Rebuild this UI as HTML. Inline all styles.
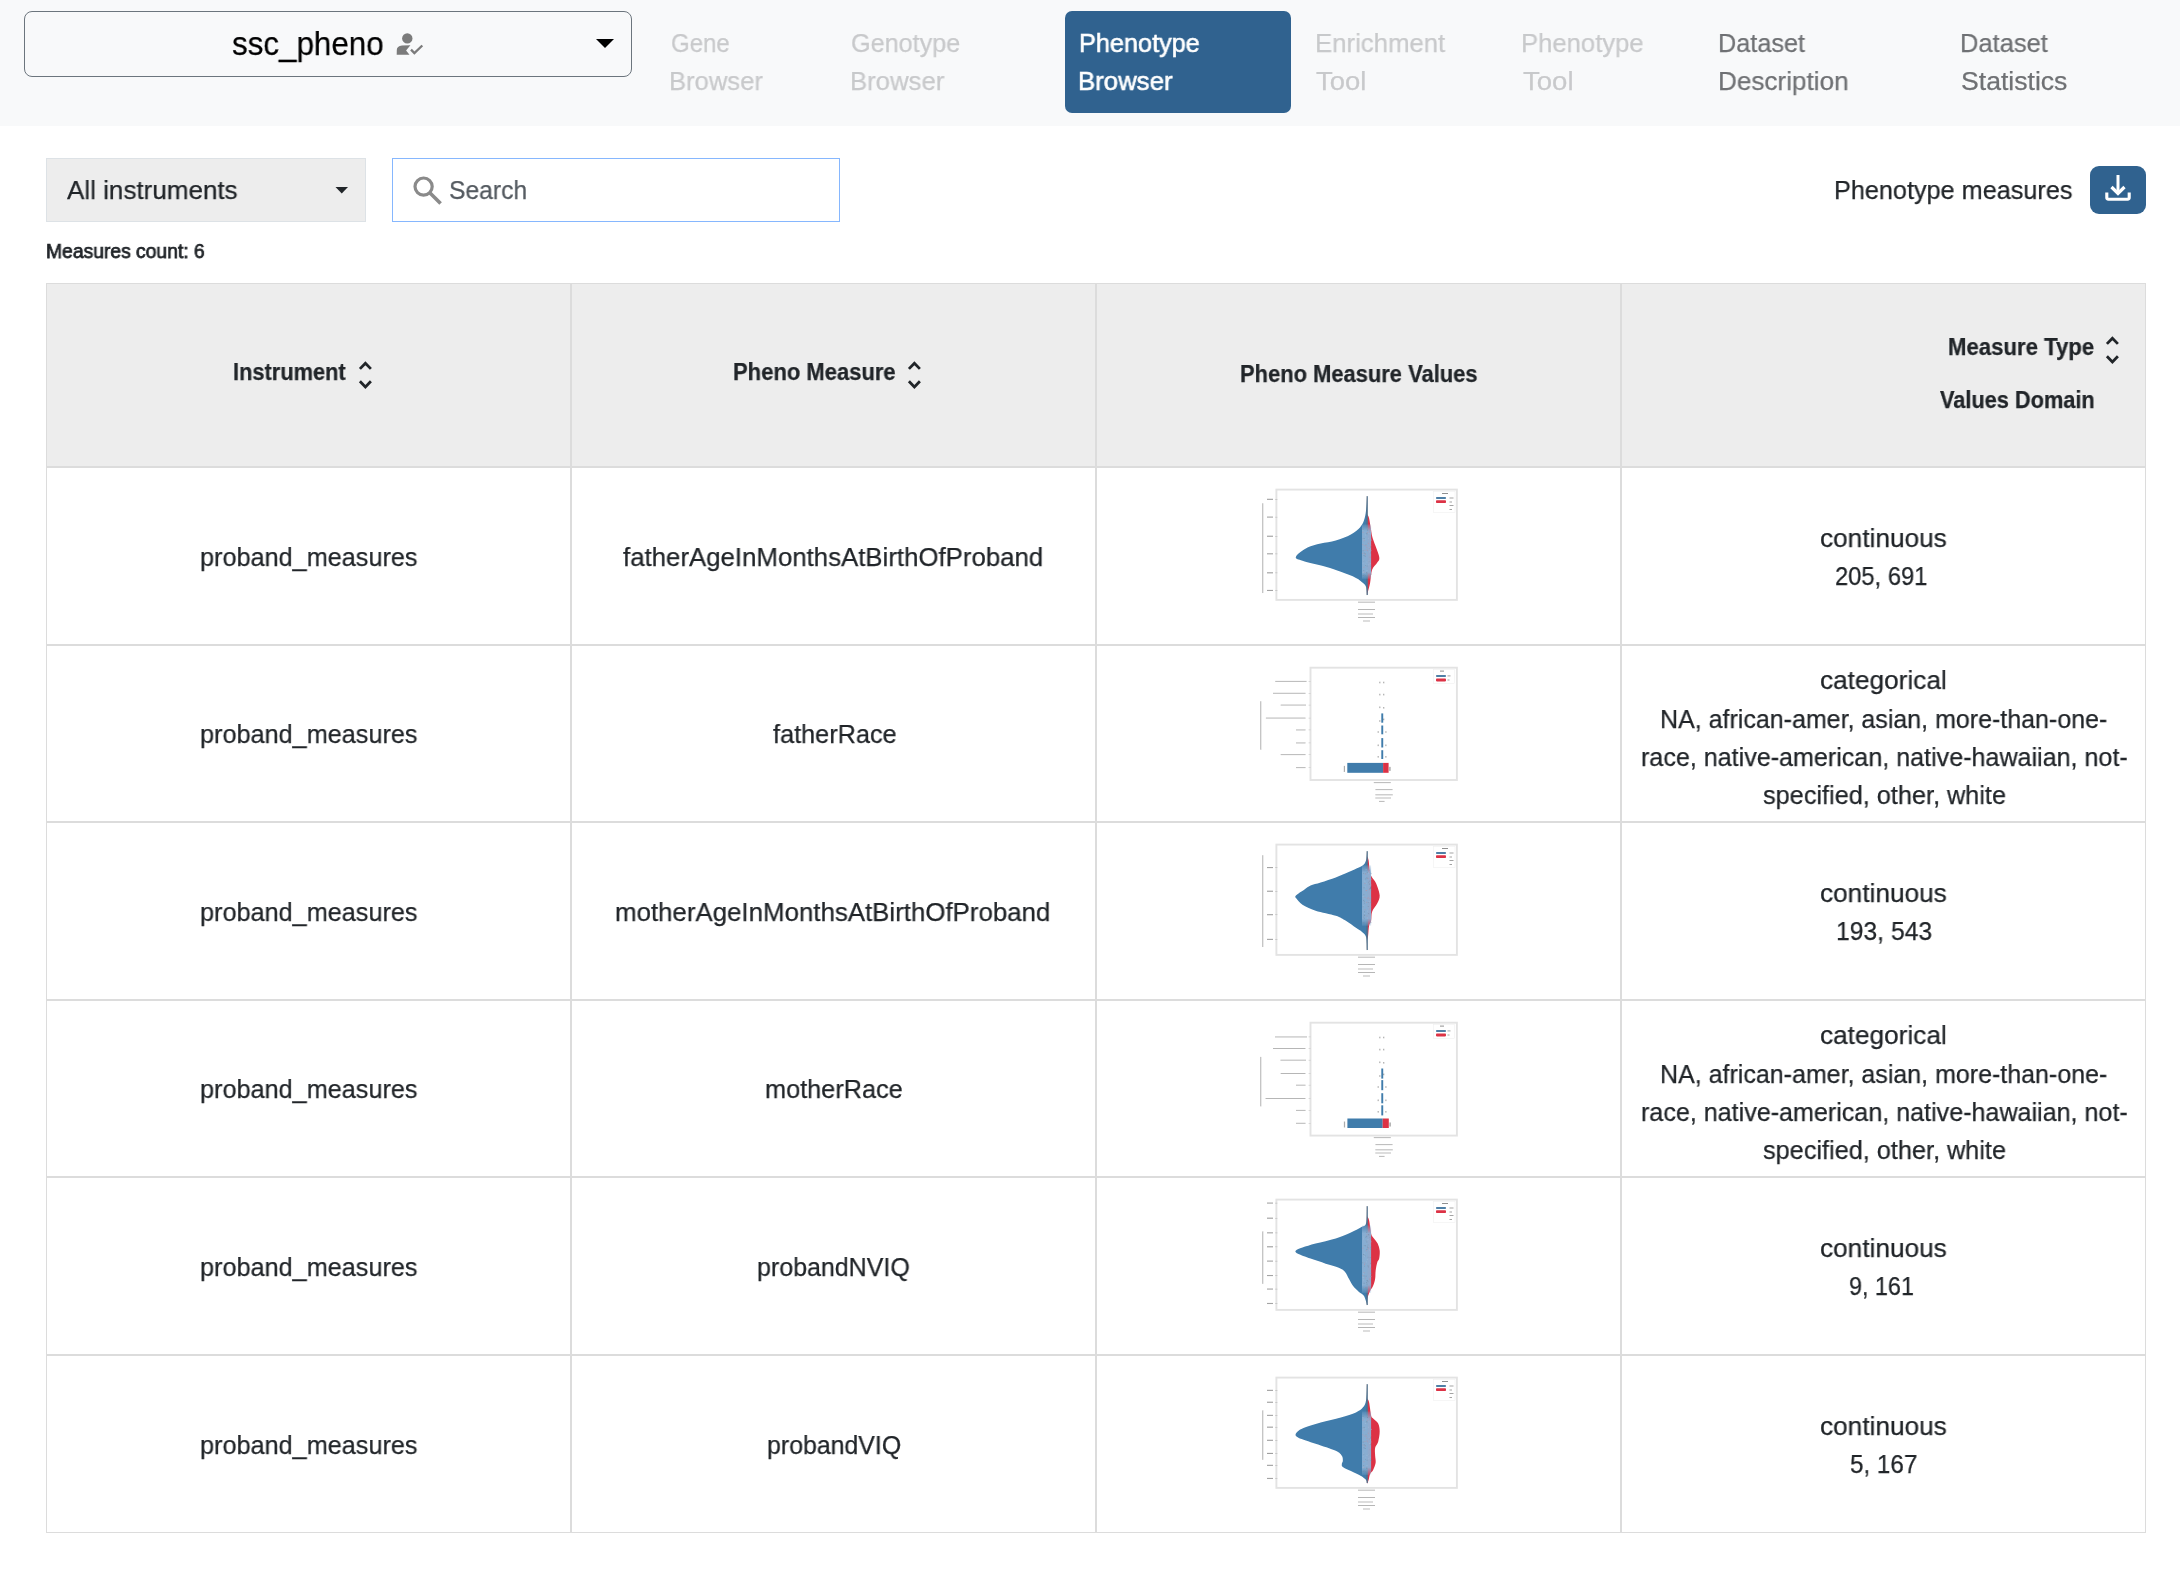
<!DOCTYPE html>
<html>
<head>
<meta charset="utf-8">
<style>
html,body{margin:0;padding:0;}
body{width:2180px;height:1572px;position:relative;overflow:hidden;background:#fff;font-family:"Liberation Sans",sans-serif;color:#212529;}
.a{position:absolute;white-space:nowrap;line-height:1;will-change:transform;transform-origin:0 0;-webkit-text-stroke-width:0.25px;}
.t{font-size:25.6px;}
.hdr{position:absolute;left:0;top:0;width:2180px;height:126px;background:#f8f9fa;}
.nav{font-size:25.6px;color:#c9cbcd;}
.navd{font-size:25.6px;color:#6f7275;}
.cell{position:absolute;box-sizing:border-box;border:1px solid #dcdcdc;}
.hcell{background:#ededed;}
.b{font-weight:bold;font-size:22.4px;}
.cc{position:absolute;box-sizing:border-box;display:flex;align-items:center;justify-content:center;text-align:center;font-size:25.6px;line-height:38.4px;padding-top:1px;}
.cc>div{white-space:nowrap;}
</style>
</head>
<body>
<div class="hdr"></div>
<!-- dataset selector -->
<div style="position:absolute;left:24px;top:11px;width:608px;height:66px;box-sizing:border-box;border:1px solid #6c757d;border-radius:8px;"></div>
<svg style="position:absolute;left:390px;top:28px" width="40" height="32" viewBox="0 0 40 32">
  <circle cx="17.3" cy="10.4" r="5.2" fill="#7b7b7b"/>
  <path d="M6.7 26.7 L19.5 26.7 L16.1 22.4 L20.4 17.3 L12 17.5 C8.5 18 6.8 19.5 6.8 22 Z" fill="#7b7b7b"/>
  <path d="M21 21.6 L24.4 25.1 L32.3 17.5" stroke="#7b7b7b" stroke-width="2.3" fill="none"/>
</svg>
<svg style="position:absolute;left:594px;top:37px" width="22" height="13" viewBox="0 0 22 13"><path d="M2 2 L20 2 L11 11 Z" fill="#000"/></svg>

<!-- nav -->
<div style="position:absolute;left:1065px;top:11px;width:226px;height:102px;background:#30628f;border-radius:7px;"></div>

<!-- toolbar -->
<div style="position:absolute;left:46px;top:158px;width:320px;height:64px;box-sizing:border-box;background:#ededed;border:1px solid #dde2e6;"></div>
<svg style="position:absolute;left:334px;top:185px" width="16" height="10" viewBox="0 0 16 10"><path d="M1.5 2 L14 2 L7.75 8.5 Z" fill="#212529"/></svg>
<div style="position:absolute;left:392px;top:158px;width:448px;height:64px;box-sizing:border-box;border:1px solid #86b7fe;background:#fff;"></div>
<svg style="position:absolute;left:408px;top:172px" width="40" height="36" viewBox="0 0 40 36">
  <circle cx="15.6" cy="14.6" r="8.6" stroke="#8a8a8a" stroke-width="3.2" fill="none"/>
  <path d="M21.8 20.8 L32.6 31.6" stroke="#8a8a8a" stroke-width="3.6" fill="none"/>
</svg>
<div style="position:absolute;left:2090px;top:166px;width:56px;height:48px;background:#30628f;border-radius:9px;"></div>
<svg style="position:absolute;left:2090px;top:166px" width="56" height="48" viewBox="0 0 56 48">
  <path d="M28 9 L28 27" stroke="#fff" stroke-width="3" fill="none"/>
  <path d="M21.5 21 L28 27.5 L34.5 21" stroke="#fff" stroke-width="3.2" fill="none"/>
  <path d="M16.8 26.5 L16.8 31.6 Q16.8 33.2 18.4 33.2 L37.6 33.2 Q39.2 33.2 39.2 31.6 L39.2 26.5" stroke="#fff" stroke-width="3.1" fill="none"/>
</svg>

<!-- TABLE -->
<div class="cell hcell" style="left:46px;top:283px;width:525px;height:184px;"></div>
<div class="cell hcell" style="left:571px;top:283px;width:525px;height:184px;"></div>
<div class="cell hcell" style="left:1096px;top:283px;width:525px;height:184px;"></div>
<div class="cell hcell" style="left:1621px;top:283px;width:525px;height:184px;"></div>
<svg style="position:absolute;left:356px;top:359px" width="18" height="32" viewBox="0 0 18 32"><path d="M3.9 9.9 L9.4 4.2 L14.9 9.9 M3.9 22.2 L9.4 27.9 L14.9 22.2" stroke="#212529" stroke-width="2.8" fill="none"/></svg>
<svg style="position:absolute;left:905px;top:359px" width="18" height="32" viewBox="0 0 18 32"><path d="M3.9 9.9 L9.4 4.2 L14.9 9.9 M3.9 22.2 L9.4 27.9 L14.9 22.2" stroke="#212529" stroke-width="2.8" fill="none"/></svg>
<svg style="position:absolute;left:2103px;top:334px" width="18" height="32" viewBox="0 0 18 32"><path d="M3.9 9.9 L9.4 4.2 L14.9 9.9 M3.9 22.2 L9.4 27.9 L14.9 22.2" stroke="#212529" stroke-width="2.8" fill="none"/></svg>
<div class="cell" style="left:46px;top:467px;width:525px;height:178px;"></div>
<div class="cell" style="left:571px;top:467px;width:525px;height:178px;"></div>
<div class="cell" style="left:1096px;top:467px;width:525px;height:178px;"></div>
<div class="cell" style="left:1621px;top:467px;width:525px;height:178px;"></div>
<svg style="position:absolute;left:1250px;top:480px" width="220" height="150" viewBox="0 0 220 150"><defs><filter id="bl480" x="-5%" y="-5%" width="110%" height="110%"><feGaussianBlur stdDeviation="0.35"/></filter></defs><g filter="url(#bl480)"><rect x="26.4" y="9.6" width="180.5" height="110.3" fill="none" stroke="#e3e3e3" stroke-width="1.9"/>
<rect x="17" y="18.78" width="6" height="1.1" fill="#222" opacity="0.42"/>
<rect x="25" y="19.08" width="2.5" height="0.6" fill="#888" opacity="0.45"/>
<rect x="17" y="36.54" width="6" height="1.1" fill="#222" opacity="0.42"/>
<rect x="25" y="36.84" width="2.5" height="0.6" fill="#888" opacity="0.45"/>
<rect x="17" y="55.71" width="6" height="1.1" fill="#222" opacity="0.42"/>
<rect x="25" y="56.01" width="2.5" height="0.6" fill="#888" opacity="0.45"/>
<rect x="17" y="73.27" width="6" height="1.1" fill="#222" opacity="0.42"/>
<rect x="25" y="73.57" width="2.5" height="0.6" fill="#888" opacity="0.45"/>
<rect x="17" y="92.24" width="6" height="1.1" fill="#222" opacity="0.42"/>
<rect x="25" y="92.54" width="2.5" height="0.6" fill="#888" opacity="0.45"/>
<rect x="17" y="109.91" width="6" height="1.1" fill="#222" opacity="0.42"/>
<rect x="25" y="110.21" width="2.5" height="0.6" fill="#888" opacity="0.45"/>
<rect x="12.2" y="23.21" width="1.1" height="89.82" fill="#333" opacity="0.35"/>
<path d="M117.07 34.35 C117.40 35.02 118.41 35.66 119.08 38.35 C119.76 41.03 120.43 46.93 121.10 50.46 C121.77 53.99 121.77 55.17 123.12 59.54 C124.47 63.91 128.50 72.83 129.18 76.70 C129.85 80.57 128.33 80.57 127.16 82.75 C125.98 84.94 123.29 86.45 122.11 89.82 C120.93 93.18 120.77 99.40 120.09 102.94 C119.42 106.47 118.58 109.00 118.07 111.01 C117.57 113.02 117.23 114.34 117.07 115.01 Z" fill="#dc3044"/>
<path d="M117.07 16.15 C116.90 18.50 116.56 26.24 116.06 30.28 C115.55 34.31 115.05 37.51 114.04 40.37 C113.03 43.23 112.19 45.08 110.00 47.43 C107.81 49.79 104.96 52.31 100.92 54.50 C96.88 56.68 90.83 59.04 85.78 60.55 C80.73 62.06 75.35 62.40 70.64 63.58 C65.93 64.76 61.64 65.43 57.52 67.62 C53.40 69.80 46.76 74.51 45.92 76.70 C45.08 78.88 47.52 79.05 52.48 80.73 C57.44 82.42 69.30 84.94 75.69 86.79 C82.08 88.64 85.78 89.99 90.83 91.84 C95.87 93.69 102.26 96.04 105.96 97.89 C109.66 99.74 111.35 101.42 113.03 102.94 C114.71 104.45 115.38 104.96 116.06 106.97 C116.73 108.99 116.90 113.70 117.07 115.05 L117.67 115.05 L117.67 16.15 Z" fill="#3f7cab"/>
<rect x="116.17" y="16.15" width="1.8" height="98.90" fill="#5a6673" opacity="0.5"/>
<defs><linearGradient id="sg474950" x1="0" y1="0" x2="0" y2="1"><stop offset="0" stop-color="#8cb0d4" stop-opacity="0.2"/><stop offset="0.12" stop-color="#8cb0d4" stop-opacity="0.95"/><stop offset="0.88" stop-color="#8cb0d4" stop-opacity="0.95"/><stop offset="1" stop-color="#8cb0d4" stop-opacity="0.2"/></linearGradient></defs>
<rect x="112.02" y="44.43" width="9.08" height="54.44" fill="url(#sg474950)"/>
<rect x="112.39" y="64.20" width="0.9" height="0.9" fill="#c98a98" opacity="0.55"/>
<rect x="116.71" y="85.67" width="0.9" height="0.9" fill="#7a8ea2" opacity="0.55"/>
<rect x="118.45" y="81.01" width="0.9" height="0.9" fill="#7a8ea2" opacity="0.55"/>
<rect x="112.54" y="49.78" width="0.9" height="0.9" fill="#a9c4de" opacity="0.55"/>
<rect x="120.39" y="64.94" width="0.9" height="0.9" fill="#c98a98" opacity="0.55"/>
<rect x="113.77" y="72.65" width="0.9" height="0.9" fill="#6b7f93" opacity="0.55"/>
<rect x="116.49" y="53.50" width="0.9" height="0.9" fill="#6b7f93" opacity="0.55"/>
<rect x="112.35" y="72.85" width="0.9" height="0.9" fill="#c98a98" opacity="0.55"/>
<rect x="119.98" y="66.30" width="0.9" height="0.9" fill="#7a8ea2" opacity="0.55"/>
<rect x="112.72" y="95.08" width="0.9" height="0.9" fill="#6b7f93" opacity="0.55"/>
<rect x="120.89" y="70.17" width="0.9" height="0.9" fill="#c98a98" opacity="0.55"/>
<rect x="120.69" y="85.80" width="0.9" height="0.9" fill="#6b7f93" opacity="0.55"/>
<rect x="114.84" y="73.34" width="0.9" height="0.9" fill="#7a8ea2" opacity="0.55"/>
<rect x="120.11" y="72.47" width="0.9" height="0.9" fill="#7a8ea2" opacity="0.55"/>
<rect x="112.66" y="48.85" width="0.9" height="0.9" fill="#7a8ea2" opacity="0.55"/>
<rect x="112.61" y="82.66" width="0.9" height="0.9" fill="#a9c4de" opacity="0.55"/>
<rect x="115.31" y="58.58" width="0.9" height="0.9" fill="#a9c4de" opacity="0.55"/>
<rect x="115.88" y="65.42" width="0.9" height="0.9" fill="#c98a98" opacity="0.55"/>
<rect x="113.70" y="60.24" width="0.9" height="0.9" fill="#c98a98" opacity="0.55"/>
<rect x="119.91" y="50.34" width="0.9" height="0.9" fill="#c98a98" opacity="0.55"/>
<rect x="114.69" y="95.36" width="0.9" height="0.9" fill="#6b7f93" opacity="0.55"/>
<rect x="119.60" y="76.48" width="0.9" height="0.9" fill="#c98a98" opacity="0.55"/>
<rect x="112.66" y="70.36" width="0.9" height="0.9" fill="#6b7f93" opacity="0.55"/>
<rect x="115.51" y="64.48" width="0.9" height="0.9" fill="#6b7f93" opacity="0.55"/>
<rect x="120.13" y="68.43" width="0.9" height="0.9" fill="#a9c4de" opacity="0.55"/>
<rect x="120.97" y="59.60" width="0.9" height="0.9" fill="#a9c4de" opacity="0.55"/>
<rect x="112.71" y="58.36" width="0.9" height="0.9" fill="#6b7f93" opacity="0.55"/>
<rect x="118.76" y="67.65" width="0.9" height="0.9" fill="#c98a98" opacity="0.55"/>
<rect x="120.61" y="93.71" width="0.9" height="0.9" fill="#6b7f93" opacity="0.55"/>
<rect x="119.69" y="67.51" width="0.9" height="0.9" fill="#7a8ea2" opacity="0.55"/>
<rect x="118.28" y="80.70" width="0.9" height="0.9" fill="#a9c4de" opacity="0.55"/>
<rect x="114.51" y="69.91" width="0.9" height="0.9" fill="#c98a98" opacity="0.55"/>
<rect x="113.22" y="90.03" width="0.9" height="0.9" fill="#7a8ea2" opacity="0.55"/>
<rect x="116.17" y="52.87" width="0.9" height="0.9" fill="#7a8ea2" opacity="0.55"/>
<rect x="116.56" y="90.06" width="0.9" height="0.9" fill="#a9c4de" opacity="0.55"/>
<rect x="119.81" y="77.01" width="0.9" height="0.9" fill="#c98a98" opacity="0.55"/>
<rect x="116.99" y="70.15" width="0.9" height="0.9" fill="#c98a98" opacity="0.55"/>
<rect x="113.58" y="91.79" width="0.9" height="0.9" fill="#c98a98" opacity="0.55"/>
<rect x="113.39" y="80.47" width="0.9" height="0.9" fill="#7a8ea2" opacity="0.55"/>
<rect x="118.70" y="66.83" width="0.9" height="0.9" fill="#a9c4de" opacity="0.55"/>
<rect x="115.57" y="64.67" width="0.9" height="0.9" fill="#a9c4de" opacity="0.55"/>
<rect x="119.03" y="71.43" width="0.9" height="0.9" fill="#a9c4de" opacity="0.55"/>
<rect x="114.85" y="73.79" width="0.9" height="0.9" fill="#c98a98" opacity="0.55"/>
<rect x="113.29" y="79.74" width="0.9" height="0.9" fill="#a9c4de" opacity="0.55"/>
<rect x="117.07" y="49.57" width="0.9" height="0.9" fill="#6b7f93" opacity="0.55"/>
<rect x="113.65" y="94.31" width="0.9" height="0.9" fill="#7a8ea2" opacity="0.55"/>
<rect x="114.16" y="58.00" width="0.9" height="0.9" fill="#7a8ea2" opacity="0.55"/>
<rect x="117.83" y="62.88" width="0.9" height="0.9" fill="#c98a98" opacity="0.55"/>
<rect x="117.86" y="57.81" width="0.9" height="0.9" fill="#a9c4de" opacity="0.55"/>
<rect x="120.28" y="50.06" width="0.9" height="0.9" fill="#c98a98" opacity="0.55"/>
<rect x="114.99" y="84.84" width="0.9" height="0.9" fill="#7a8ea2" opacity="0.55"/>
<rect x="116.51" y="81.63" width="0.9" height="0.9" fill="#a9c4de" opacity="0.55"/>
<rect x="112.51" y="51.88" width="0.9" height="0.9" fill="#c98a98" opacity="0.55"/>
<rect x="115.38" y="83.74" width="0.9" height="0.9" fill="#a9c4de" opacity="0.55"/>
<rect x="112.68" y="91.87" width="0.9" height="0.9" fill="#a9c4de" opacity="0.55"/>
<rect x="113.56" y="86.85" width="0.9" height="0.9" fill="#c98a98" opacity="0.55"/>
<rect x="114.45" y="65.23" width="0.9" height="0.9" fill="#c98a98" opacity="0.55"/>
<rect x="118.42" y="84.36" width="0.9" height="0.9" fill="#a9c4de" opacity="0.55"/>
<rect x="113.56" y="75.13" width="0.9" height="0.9" fill="#6b7f93" opacity="0.55"/>
<rect x="119.12" y="51.51" width="0.9" height="0.9" fill="#c98a98" opacity="0.55"/>
<rect x="116.38" y="92.43" width="0.9" height="0.9" fill="#6b7f93" opacity="0.55"/>
<rect x="116.53" y="69.23" width="0.9" height="0.9" fill="#c98a98" opacity="0.55"/>
<rect x="114.74" y="75.75" width="0.9" height="0.9" fill="#6b7f93" opacity="0.55"/>
<rect x="119.74" y="83.06" width="0.9" height="0.9" fill="#a9c4de" opacity="0.55"/>
<rect x="116.16" y="92.20" width="0.9" height="0.9" fill="#7a8ea2" opacity="0.55"/>
<rect x="115.08" y="54.58" width="0.9" height="0.9" fill="#a9c4de" opacity="0.55"/>
<rect x="116.35" y="67.14" width="0.9" height="0.9" fill="#c98a98" opacity="0.55"/>
<rect x="117.01" y="51.94" width="0.9" height="0.9" fill="#c98a98" opacity="0.55"/>
<rect x="118.53" y="53.30" width="0.9" height="0.9" fill="#a9c4de" opacity="0.55"/>
<rect x="112.78" y="59.31" width="0.9" height="0.9" fill="#a9c4de" opacity="0.55"/>
<rect x="183.5" y="11.50" width="21.5" height="21" fill="#fff" stroke="#eee" stroke-width="0.5"/>
<rect x="192" y="13.00" width="6" height="1" fill="#222" opacity="0.5"/>
<rect x="186" y="17.00" width="10" height="2" rx="0.8" fill="#4f7fa6"/>
<rect x="186" y="20.30" width="10" height="2.8" rx="0.8" fill="#dc3044"/>
<rect x="199.5" y="17.50" width="4" height="1" fill="#333" opacity="0.45"/>
<rect x="199.5" y="21.50" width="2.5" height="1" fill="#333" opacity="0.45"/>
<rect x="199.5" y="25.00" width="4" height="1" fill="#333" opacity="0.45"/>
<rect x="199.5" y="29.00" width="2.5" height="1" fill="#333" opacity="0.45"/>
<rect x="108" y="121.70" width="17" height="1" fill="#222" opacity="0.32"/>
<rect x="108" y="129.00" width="17" height="1" fill="#222" opacity="0.32"/>
<rect x="108" y="133.50" width="15" height="1" fill="#222" opacity="0.32"/>
<rect x="108" y="137.00" width="17" height="1" fill="#222" opacity="0.32"/>
<rect x="113" y="140.50" width="7" height="1" fill="#222" opacity="0.32"/></g></svg>
<div class="cell" style="left:46px;top:645px;width:525px;height:177px;"></div>
<div class="cell" style="left:571px;top:645px;width:525px;height:177px;"></div>
<div class="cell" style="left:1096px;top:645px;width:525px;height:177px;"></div>
<div class="cell" style="left:1621px;top:645px;width:525px;height:177px;"></div>
<svg style="position:absolute;left:1250px;top:658px" width="220" height="150" viewBox="0 0 220 150"><defs><filter id="bl658" x="-5%" y="-5%" width="110%" height="110%"><feGaussianBlur stdDeviation="0.35"/></filter></defs><g filter="url(#bl658)"><rect x="60.5" y="9.7" width="146.4" height="112.30" fill="none" stroke="#e3e3e3" stroke-width="1.9"/>
<rect x="97.3" y="104.9" width="35.80" height="9.90" fill="#3f7cab"/>
<rect x="133.1" y="104.9" width="5.50" height="9.90" fill="#dc3044"/>
<rect x="93.80" y="107.90" width="1.2" height="6" fill="#333" opacity="0.4"/>
<rect x="139.20" y="108.90" width="1.4" height="4" fill="#333" opacity="0.45"/>
<rect x="131.3" y="55.4" width="1.9" height="9.30" fill="#3f7cab"/>
<rect x="131.3" y="67.5" width="1.9" height="8.80" fill="#3f7cab"/>
<rect x="131.3" y="80.1" width="1.9" height="9.40" fill="#3f7cab"/>
<rect x="131.3" y="92.2" width="1.9" height="8.80" fill="#3f7cab"/>
<rect x="129.20" y="23.70" width="1.2" height="1.6" fill="#333" opacity="0.4"/>
<rect x="133.10" y="23.70" width="1.2" height="1.6" fill="#333" opacity="0.4"/>
<rect x="129.20" y="35.80" width="1.2" height="1.6" fill="#333" opacity="0.4"/>
<rect x="133.10" y="35.80" width="1.2" height="1.6" fill="#333" opacity="0.4"/>
<rect x="129.20" y="48.50" width="1.2" height="1.6" fill="#333" opacity="0.4"/>
<rect x="133.10" y="49.00" width="1.2" height="1.6" fill="#333" opacity="0.4"/>
<rect x="129.20" y="62.20" width="1.2" height="1.6" fill="#333" opacity="0.4"/>
<rect x="133.10" y="60.60" width="1.2" height="1.6" fill="#333" opacity="0.4"/>
<rect x="127.60" y="73.20" width="1.2" height="1.6" fill="#333" opacity="0.4"/>
<rect x="135.30" y="73.20" width="1.2" height="1.6" fill="#333" opacity="0.4"/>
<rect x="127.60" y="86.50" width="1.2" height="1.6" fill="#333" opacity="0.4"/>
<rect x="135.30" y="86.50" width="1.2" height="1.6" fill="#333" opacity="0.4"/>
<rect x="127.60" y="98.00" width="1.2" height="1.6" fill="#333" opacity="0.4"/>
<rect x="135.30" y="98.00" width="1.2" height="1.6" fill="#333" opacity="0.4"/>
<rect x="25.20" y="22.90" width="31.40" height="1" fill="#222" opacity="0.32"/>
<rect x="58.5" y="23.10" width="2" height="0.6" fill="#888" opacity="0.4"/>
<rect x="23.00" y="34.80" width="32.50" height="1" fill="#222" opacity="0.32"/>
<rect x="58.5" y="35.00" width="2" height="0.6" fill="#888" opacity="0.4"/>
<rect x="30.70" y="46.60" width="25.30" height="1" fill="#222" opacity="0.32"/>
<rect x="58.5" y="46.80" width="2" height="0.6" fill="#888" opacity="0.4"/>
<rect x="15.90" y="59.60" width="39.60" height="1" fill="#222" opacity="0.32"/>
<rect x="58.5" y="59.80" width="2" height="0.6" fill="#888" opacity="0.4"/>
<rect x="46.00" y="71.40" width="9.50" height="1" fill="#222" opacity="0.32"/>
<rect x="58.5" y="71.60" width="2" height="0.6" fill="#888" opacity="0.4"/>
<rect x="46.00" y="84.40" width="9.50" height="1" fill="#222" opacity="0.32"/>
<rect x="58.5" y="84.60" width="2" height="0.6" fill="#888" opacity="0.4"/>
<rect x="30.70" y="96.10" width="24.80" height="1" fill="#222" opacity="0.32"/>
<rect x="58.5" y="96.30" width="2" height="0.6" fill="#888" opacity="0.4"/>
<rect x="46.00" y="109.10" width="9.50" height="1" fill="#222" opacity="0.32"/>
<rect x="58.5" y="109.30" width="2" height="0.6" fill="#888" opacity="0.4"/>
<rect x="10.2" y="43.20" width="1.1" height="48.50" fill="#333" opacity="0.35"/>
<rect x="183.5" y="11.5" width="21" height="14" fill="#fff" stroke="#eee" stroke-width="0.5"/>
<rect x="190" y="12.6" width="4" height="1" fill="#222" opacity="0.5"/>
<rect x="186" y="17" width="10" height="2" rx="0.8" fill="#4f7fa6"/>
<rect x="186" y="20.6" width="10" height="2.8" rx="0.8" fill="#dc3044"/>
<rect x="197.5" y="17.4" width="3" height="1" fill="#333" opacity="0.45"/>
<rect x="197.5" y="21.5" width="2" height="1" fill="#333" opacity="0.45"/>
<rect x="123.8" y="124.10" width="17.00" height="1" fill="#222" opacity="0.32"/>
<rect x="125.4" y="131.10" width="17.10" height="1" fill="#222" opacity="0.32"/>
<rect x="125.4" y="136.30" width="17.40" height="1" fill="#222" opacity="0.32"/>
<rect x="125.4" y="139.50" width="15.60" height="1" fill="#222" opacity="0.32"/>
<rect x="129" y="142.90" width="5.50" height="1" fill="#222" opacity="0.32"/></g></svg>
<div class="cell" style="left:46px;top:822px;width:525px;height:178px;"></div>
<div class="cell" style="left:571px;top:822px;width:525px;height:178px;"></div>
<div class="cell" style="left:1096px;top:822px;width:525px;height:178px;"></div>
<div class="cell" style="left:1621px;top:822px;width:525px;height:178px;"></div>
<svg style="position:absolute;left:1250px;top:835px" width="220" height="150" viewBox="0 0 220 150"><defs><filter id="bl835" x="-5%" y="-5%" width="110%" height="110%"><feGaussianBlur stdDeviation="0.35"/></filter></defs><g filter="url(#bl835)"><rect x="26.4" y="9.6" width="180.5" height="110.3" fill="none" stroke="#e3e3e3" stroke-width="1.9"/>
<rect x="17" y="32.00" width="6" height="1.1" fill="#222" opacity="0.42"/>
<rect x="25" y="32.30" width="2.5" height="0.6" fill="#888" opacity="0.45"/>
<rect x="17" y="55.71" width="6" height="1.1" fill="#222" opacity="0.42"/>
<rect x="25" y="56.01" width="2.5" height="0.6" fill="#888" opacity="0.45"/>
<rect x="17" y="79.13" width="6" height="1.1" fill="#222" opacity="0.42"/>
<rect x="25" y="79.43" width="2.5" height="0.6" fill="#888" opacity="0.45"/>
<rect x="17" y="103.85" width="6" height="1.1" fill="#222" opacity="0.42"/>
<rect x="25" y="104.15" width="2.5" height="0.6" fill="#888" opacity="0.45"/>
<rect x="12.2" y="20.18" width="1.1" height="91.84" fill="#333" opacity="0.35"/>
<path d="M117.07 21.23 C117.32 21.90 118.07 22.38 118.58 25.23 C119.08 28.08 119.50 35.49 120.09 38.35 C120.68 41.21 121.10 40.70 122.11 42.39 C123.12 44.07 124.89 45.41 126.15 48.44 C127.41 51.47 129.51 57.19 129.68 60.55 C129.85 63.91 128.42 65.93 127.16 68.62 C125.90 71.32 123.12 73.84 122.11 76.70 C121.10 79.56 121.61 83.43 121.10 85.78 C120.60 88.14 119.59 88.30 119.08 90.83 C118.58 93.35 118.41 98.57 118.07 100.92 C117.74 103.27 117.23 104.25 117.07 104.92 Z" fill="#dc3044"/>
<path d="M117.07 16.15 C116.90 17.66 116.73 22.87 116.06 25.23 C115.38 27.58 114.54 28.93 113.03 30.28 C111.51 31.62 109.83 31.96 106.97 33.30 C104.11 34.65 99.40 36.84 95.87 38.35 C92.34 39.86 89.99 40.87 85.78 42.39 C81.58 43.90 74.85 46.09 70.64 47.43 C66.44 48.78 63.24 49.28 60.55 50.46 C57.86 51.64 56.93 52.81 54.50 54.50 C52.06 56.18 47.26 59.04 45.92 60.55 C44.57 62.06 45.33 62.06 46.42 63.58 C47.52 65.09 49.28 67.62 52.48 69.63 C55.67 71.65 60.05 73.84 65.60 75.69 C71.15 77.54 80.73 79.05 85.78 80.73 C90.83 82.42 92.51 83.76 95.87 85.78 C99.24 87.80 103.27 90.99 105.96 92.84 C108.66 94.70 110.34 95.37 112.02 96.88 C113.70 98.40 115.22 98.90 116.06 101.93 C116.90 104.96 116.90 112.86 117.07 115.05 L117.67 115.05 L117.67 16.15 Z" fill="#3f7cab"/>
<rect x="116.17" y="16.15" width="1.8" height="98.90" fill="#5a6673" opacity="0.5"/>
<defs><linearGradient id="sg333870" x1="0" y1="0" x2="0" y2="1"><stop offset="0" stop-color="#8cb0d4" stop-opacity="0.2"/><stop offset="0.12" stop-color="#8cb0d4" stop-opacity="0.95"/><stop offset="0.88" stop-color="#8cb0d4" stop-opacity="0.95"/><stop offset="1" stop-color="#8cb0d4" stop-opacity="0.2"/></linearGradient></defs>
<rect x="112.02" y="30.30" width="9.08" height="60.50" fill="url(#sg333870)"/>
<rect x="120.66" y="66.94" width="0.9" height="0.9" fill="#6b7f93" opacity="0.55"/>
<rect x="115.67" y="34.19" width="0.9" height="0.9" fill="#a9c4de" opacity="0.55"/>
<rect x="119.38" y="73.66" width="0.9" height="0.9" fill="#c98a98" opacity="0.55"/>
<rect x="113.12" y="37.97" width="0.9" height="0.9" fill="#7a8ea2" opacity="0.55"/>
<rect x="114.24" y="79.82" width="0.9" height="0.9" fill="#6b7f93" opacity="0.55"/>
<rect x="116.73" y="37.18" width="0.9" height="0.9" fill="#6b7f93" opacity="0.55"/>
<rect x="116.03" y="55.01" width="0.9" height="0.9" fill="#c98a98" opacity="0.55"/>
<rect x="113.45" y="59.21" width="0.9" height="0.9" fill="#7a8ea2" opacity="0.55"/>
<rect x="117.07" y="42.69" width="0.9" height="0.9" fill="#7a8ea2" opacity="0.55"/>
<rect x="120.20" y="51.87" width="0.9" height="0.9" fill="#6b7f93" opacity="0.55"/>
<rect x="119.06" y="34.77" width="0.9" height="0.9" fill="#7a8ea2" opacity="0.55"/>
<rect x="116.98" y="82.56" width="0.9" height="0.9" fill="#a9c4de" opacity="0.55"/>
<rect x="116.69" y="63.18" width="0.9" height="0.9" fill="#c98a98" opacity="0.55"/>
<rect x="120.77" y="49.48" width="0.9" height="0.9" fill="#c98a98" opacity="0.55"/>
<rect x="120.85" y="54.47" width="0.9" height="0.9" fill="#6b7f93" opacity="0.55"/>
<rect x="119.77" y="63.33" width="0.9" height="0.9" fill="#c98a98" opacity="0.55"/>
<rect x="113.66" y="79.59" width="0.9" height="0.9" fill="#6b7f93" opacity="0.55"/>
<rect x="120.99" y="62.58" width="0.9" height="0.9" fill="#6b7f93" opacity="0.55"/>
<rect x="114.67" y="74.27" width="0.9" height="0.9" fill="#c98a98" opacity="0.55"/>
<rect x="117.74" y="43.14" width="0.9" height="0.9" fill="#c98a98" opacity="0.55"/>
<rect x="117.96" y="37.70" width="0.9" height="0.9" fill="#a9c4de" opacity="0.55"/>
<rect x="119.03" y="45.76" width="0.9" height="0.9" fill="#7a8ea2" opacity="0.55"/>
<rect x="116.13" y="42.40" width="0.9" height="0.9" fill="#7a8ea2" opacity="0.55"/>
<rect x="114.86" y="38.32" width="0.9" height="0.9" fill="#7a8ea2" opacity="0.55"/>
<rect x="118.48" y="63.37" width="0.9" height="0.9" fill="#c98a98" opacity="0.55"/>
<rect x="118.91" y="54.05" width="0.9" height="0.9" fill="#c98a98" opacity="0.55"/>
<rect x="120.31" y="52.80" width="0.9" height="0.9" fill="#6b7f93" opacity="0.55"/>
<rect x="113.85" y="65.94" width="0.9" height="0.9" fill="#7a8ea2" opacity="0.55"/>
<rect x="120.96" y="44.03" width="0.9" height="0.9" fill="#c98a98" opacity="0.55"/>
<rect x="114.76" y="51.48" width="0.9" height="0.9" fill="#a9c4de" opacity="0.55"/>
<rect x="117.13" y="75.64" width="0.9" height="0.9" fill="#a9c4de" opacity="0.55"/>
<rect x="117.84" y="67.02" width="0.9" height="0.9" fill="#7a8ea2" opacity="0.55"/>
<rect x="112.68" y="71.23" width="0.9" height="0.9" fill="#7a8ea2" opacity="0.55"/>
<rect x="120.50" y="87.17" width="0.9" height="0.9" fill="#7a8ea2" opacity="0.55"/>
<rect x="115.28" y="43.50" width="0.9" height="0.9" fill="#6b7f93" opacity="0.55"/>
<rect x="117.81" y="71.07" width="0.9" height="0.9" fill="#7a8ea2" opacity="0.55"/>
<rect x="113.75" y="34.63" width="0.9" height="0.9" fill="#7a8ea2" opacity="0.55"/>
<rect x="114.29" y="78.29" width="0.9" height="0.9" fill="#a9c4de" opacity="0.55"/>
<rect x="115.57" y="55.19" width="0.9" height="0.9" fill="#c98a98" opacity="0.55"/>
<rect x="118.25" y="78.19" width="0.9" height="0.9" fill="#6b7f93" opacity="0.55"/>
<rect x="113.22" y="64.90" width="0.9" height="0.9" fill="#6b7f93" opacity="0.55"/>
<rect x="117.70" y="62.14" width="0.9" height="0.9" fill="#c98a98" opacity="0.55"/>
<rect x="118.79" y="48.39" width="0.9" height="0.9" fill="#7a8ea2" opacity="0.55"/>
<rect x="112.62" y="87.38" width="0.9" height="0.9" fill="#6b7f93" opacity="0.55"/>
<rect x="115.34" y="38.70" width="0.9" height="0.9" fill="#c98a98" opacity="0.55"/>
<rect x="115.73" y="47.82" width="0.9" height="0.9" fill="#a9c4de" opacity="0.55"/>
<rect x="119.28" y="48.97" width="0.9" height="0.9" fill="#7a8ea2" opacity="0.55"/>
<rect x="114.61" y="46.43" width="0.9" height="0.9" fill="#a9c4de" opacity="0.55"/>
<rect x="112.61" y="60.92" width="0.9" height="0.9" fill="#a9c4de" opacity="0.55"/>
<rect x="120.66" y="38.16" width="0.9" height="0.9" fill="#7a8ea2" opacity="0.55"/>
<rect x="116.42" y="80.57" width="0.9" height="0.9" fill="#c98a98" opacity="0.55"/>
<rect x="120.48" y="71.32" width="0.9" height="0.9" fill="#c98a98" opacity="0.55"/>
<rect x="119.33" y="53.49" width="0.9" height="0.9" fill="#6b7f93" opacity="0.55"/>
<rect x="114.44" y="48.02" width="0.9" height="0.9" fill="#c98a98" opacity="0.55"/>
<rect x="113.58" y="52.34" width="0.9" height="0.9" fill="#6b7f93" opacity="0.55"/>
<rect x="118.72" y="65.94" width="0.9" height="0.9" fill="#a9c4de" opacity="0.55"/>
<rect x="113.71" y="87.49" width="0.9" height="0.9" fill="#6b7f93" opacity="0.55"/>
<rect x="116.08" y="66.82" width="0.9" height="0.9" fill="#c98a98" opacity="0.55"/>
<rect x="120.33" y="51.64" width="0.9" height="0.9" fill="#6b7f93" opacity="0.55"/>
<rect x="118.10" y="46.82" width="0.9" height="0.9" fill="#7a8ea2" opacity="0.55"/>
<rect x="114.13" y="76.43" width="0.9" height="0.9" fill="#6b7f93" opacity="0.55"/>
<rect x="113.82" y="82.97" width="0.9" height="0.9" fill="#7a8ea2" opacity="0.55"/>
<rect x="114.52" y="62.08" width="0.9" height="0.9" fill="#c98a98" opacity="0.55"/>
<rect x="119.72" y="45.53" width="0.9" height="0.9" fill="#c98a98" opacity="0.55"/>
<rect x="113.37" y="70.36" width="0.9" height="0.9" fill="#a9c4de" opacity="0.55"/>
<rect x="113.36" y="81.59" width="0.9" height="0.9" fill="#7a8ea2" opacity="0.55"/>
<rect x="113.77" y="45.55" width="0.9" height="0.9" fill="#a9c4de" opacity="0.55"/>
<rect x="113.93" y="67.74" width="0.9" height="0.9" fill="#7a8ea2" opacity="0.55"/>
<rect x="119.02" y="36.99" width="0.9" height="0.9" fill="#c98a98" opacity="0.55"/>
<rect x="119.84" y="52.93" width="0.9" height="0.9" fill="#6b7f93" opacity="0.55"/>
<rect x="183.5" y="11.50" width="21.5" height="21" fill="#fff" stroke="#eee" stroke-width="0.5"/>
<rect x="192" y="13.00" width="6" height="1" fill="#222" opacity="0.5"/>
<rect x="186" y="17.00" width="10" height="2" rx="0.8" fill="#4f7fa6"/>
<rect x="186" y="20.30" width="10" height="2.8" rx="0.8" fill="#dc3044"/>
<rect x="199.5" y="17.50" width="4" height="1" fill="#333" opacity="0.45"/>
<rect x="199.5" y="21.50" width="2.5" height="1" fill="#333" opacity="0.45"/>
<rect x="199.5" y="25.00" width="4" height="1" fill="#333" opacity="0.45"/>
<rect x="199.5" y="29.00" width="2.5" height="1" fill="#333" opacity="0.45"/>
<rect x="108" y="121.70" width="17" height="1" fill="#222" opacity="0.32"/>
<rect x="108" y="129.00" width="17" height="1" fill="#222" opacity="0.32"/>
<rect x="108" y="133.50" width="15" height="1" fill="#222" opacity="0.32"/>
<rect x="108" y="137.00" width="17" height="1" fill="#222" opacity="0.32"/>
<rect x="113" y="140.50" width="7" height="1" fill="#222" opacity="0.32"/></g></svg>
<div class="cell" style="left:46px;top:1000px;width:525px;height:177px;"></div>
<div class="cell" style="left:571px;top:1000px;width:525px;height:177px;"></div>
<div class="cell" style="left:1096px;top:1000px;width:525px;height:177px;"></div>
<div class="cell" style="left:1621px;top:1000px;width:525px;height:177px;"></div>
<svg style="position:absolute;left:1250px;top:1013px" width="220" height="150" viewBox="0 0 220 150"><defs><filter id="bl1013" x="-5%" y="-5%" width="110%" height="110%"><feGaussianBlur stdDeviation="0.35"/></filter></defs><g filter="url(#bl1013)"><rect x="60.5" y="9.7" width="146.4" height="112.90" fill="none" stroke="#e3e3e3" stroke-width="1.9"/>
<rect x="97.4" y="105.5" width="35.30" height="9.50" fill="#3f7cab"/>
<rect x="132.7" y="105.5" width="6.10" height="9.50" fill="#dc3044"/>
<rect x="93.90" y="108.50" width="1.2" height="6" fill="#333" opacity="0.4"/>
<rect x="139.40" y="109.50" width="1.4" height="4" fill="#333" opacity="0.45"/>
<rect x="131.3" y="55.5" width="1.9" height="10.10" fill="#3f7cab"/>
<rect x="131.3" y="67.1" width="1.9" height="10.10" fill="#3f7cab"/>
<rect x="131.3" y="80.2" width="1.9" height="10.10" fill="#3f7cab"/>
<rect x="131.3" y="92.3" width="1.9" height="10.10" fill="#3f7cab"/>
<rect x="129.20" y="23.70" width="1.2" height="1.6" fill="#333" opacity="0.4"/>
<rect x="133.10" y="23.70" width="1.2" height="1.6" fill="#333" opacity="0.4"/>
<rect x="129.20" y="35.80" width="1.2" height="1.6" fill="#333" opacity="0.4"/>
<rect x="133.10" y="35.80" width="1.2" height="1.6" fill="#333" opacity="0.4"/>
<rect x="129.20" y="48.50" width="1.2" height="1.6" fill="#333" opacity="0.4"/>
<rect x="133.10" y="49.00" width="1.2" height="1.6" fill="#333" opacity="0.4"/>
<rect x="129.20" y="62.20" width="1.2" height="1.6" fill="#333" opacity="0.4"/>
<rect x="133.10" y="60.60" width="1.2" height="1.6" fill="#333" opacity="0.4"/>
<rect x="127.60" y="73.20" width="1.2" height="1.6" fill="#333" opacity="0.4"/>
<rect x="135.30" y="73.20" width="1.2" height="1.6" fill="#333" opacity="0.4"/>
<rect x="127.60" y="86.50" width="1.2" height="1.6" fill="#333" opacity="0.4"/>
<rect x="135.30" y="86.50" width="1.2" height="1.6" fill="#333" opacity="0.4"/>
<rect x="127.60" y="98.00" width="1.2" height="1.6" fill="#333" opacity="0.4"/>
<rect x="135.30" y="98.00" width="1.2" height="1.6" fill="#333" opacity="0.4"/>
<rect x="25.00" y="23.40" width="32.00" height="1" fill="#222" opacity="0.32"/>
<rect x="58.5" y="23.60" width="2" height="0.6" fill="#888" opacity="0.4"/>
<rect x="23.00" y="35.00" width="32.50" height="1" fill="#222" opacity="0.32"/>
<rect x="58.5" y="35.20" width="2" height="0.6" fill="#888" opacity="0.4"/>
<rect x="30.50" y="46.70" width="25.50" height="1" fill="#222" opacity="0.32"/>
<rect x="58.5" y="46.90" width="2" height="0.6" fill="#888" opacity="0.4"/>
<rect x="30.70" y="60.00" width="24.80" height="1" fill="#222" opacity="0.32"/>
<rect x="58.5" y="60.20" width="2" height="0.6" fill="#888" opacity="0.4"/>
<rect x="46.00" y="71.70" width="9.50" height="1" fill="#222" opacity="0.32"/>
<rect x="58.5" y="71.90" width="2" height="0.6" fill="#888" opacity="0.4"/>
<rect x="15.50" y="85.00" width="40.00" height="1" fill="#222" opacity="0.32"/>
<rect x="58.5" y="85.20" width="2" height="0.6" fill="#888" opacity="0.4"/>
<rect x="46.00" y="96.90" width="9.50" height="1" fill="#222" opacity="0.32"/>
<rect x="58.5" y="97.10" width="2" height="0.6" fill="#888" opacity="0.4"/>
<rect x="46.00" y="109.80" width="9.50" height="1" fill="#222" opacity="0.32"/>
<rect x="58.5" y="110.00" width="2" height="0.6" fill="#888" opacity="0.4"/>
<rect x="10.2" y="43.90" width="1.1" height="49.50" fill="#333" opacity="0.35"/>
<rect x="183.5" y="11.5" width="21" height="14" fill="#fff" stroke="#eee" stroke-width="0.5"/>
<rect x="190" y="12.6" width="4" height="1" fill="#222" opacity="0.5"/>
<rect x="186" y="17" width="10" height="2" rx="0.8" fill="#4f7fa6"/>
<rect x="186" y="20.6" width="10" height="2.8" rx="0.8" fill="#dc3044"/>
<rect x="197.5" y="17.4" width="3" height="1" fill="#333" opacity="0.45"/>
<rect x="197.5" y="21.5" width="2" height="1" fill="#333" opacity="0.45"/>
<rect x="123.8" y="124.10" width="17.00" height="1" fill="#222" opacity="0.32"/>
<rect x="125.4" y="131.10" width="17.10" height="1" fill="#222" opacity="0.32"/>
<rect x="125.4" y="136.30" width="17.40" height="1" fill="#222" opacity="0.32"/>
<rect x="125.4" y="139.50" width="15.60" height="1" fill="#222" opacity="0.32"/>
<rect x="129" y="142.90" width="5.50" height="1" fill="#222" opacity="0.32"/></g></svg>
<div class="cell" style="left:46px;top:1177px;width:525px;height:178px;"></div>
<div class="cell" style="left:571px;top:1177px;width:525px;height:178px;"></div>
<div class="cell" style="left:1096px;top:1177px;width:525px;height:178px;"></div>
<div class="cell" style="left:1621px;top:1177px;width:525px;height:178px;"></div>
<svg style="position:absolute;left:1250px;top:1190px" width="220" height="150" viewBox="0 0 220 150"><defs><filter id="bl1190" x="-5%" y="-5%" width="110%" height="110%"><feGaussianBlur stdDeviation="0.35"/></filter></defs><g filter="url(#bl1190)"><rect x="26.4" y="9.6" width="180.5" height="110.3" fill="none" stroke="#e3e3e3" stroke-width="1.9"/>
<rect x="17" y="12.52" width="6" height="1.1" fill="#222" opacity="0.42"/>
<rect x="25" y="12.82" width="2.5" height="0.6" fill="#888" opacity="0.45"/>
<rect x="17" y="27.66" width="6" height="1.1" fill="#222" opacity="0.42"/>
<rect x="25" y="27.96" width="2.5" height="0.6" fill="#888" opacity="0.45"/>
<rect x="17" y="42.29" width="6" height="1.1" fill="#222" opacity="0.42"/>
<rect x="25" y="42.59" width="2.5" height="0.6" fill="#888" opacity="0.45"/>
<rect x="17" y="56.22" width="6" height="1.1" fill="#222" opacity="0.42"/>
<rect x="25" y="56.52" width="2.5" height="0.6" fill="#888" opacity="0.45"/>
<rect x="17" y="70.55" width="6" height="1.1" fill="#222" opacity="0.42"/>
<rect x="25" y="70.85" width="2.5" height="0.6" fill="#888" opacity="0.45"/>
<rect x="17" y="84.98" width="6" height="1.1" fill="#222" opacity="0.42"/>
<rect x="25" y="85.28" width="2.5" height="0.6" fill="#888" opacity="0.45"/>
<rect x="17" y="98.50" width="6" height="1.1" fill="#222" opacity="0.42"/>
<rect x="25" y="98.80" width="2.5" height="0.6" fill="#888" opacity="0.45"/>
<rect x="17" y="112.93" width="6" height="1.1" fill="#222" opacity="0.42"/>
<rect x="25" y="113.23" width="2.5" height="0.6" fill="#888" opacity="0.45"/>
<rect x="12.2" y="41.38" width="1.1" height="52.48" fill="#333" opacity="0.35"/>
<path d="M117.07 26.28 C117.40 26.94 118.41 27.42 119.08 30.28 C119.76 33.13 120.43 40.54 121.10 43.39 C121.77 46.25 122.03 45.75 123.12 47.43 C124.21 49.11 126.57 51.30 127.66 53.49 C128.76 55.67 129.43 58.03 129.68 60.55 C129.93 63.07 129.60 66.61 129.18 68.62 C128.76 70.64 127.75 70.64 127.16 72.66 C126.57 74.68 125.98 78.04 125.64 80.73 C125.31 83.43 125.56 86.29 125.14 88.81 C124.72 91.33 123.96 93.85 123.12 95.87 C122.28 97.89 120.93 99.24 120.09 100.92 C119.25 102.60 118.58 104.46 118.07 105.96 C117.57 107.47 117.23 109.30 117.07 109.96 Z" fill="#dc3044"/>
<path d="M117.07 16.15 C116.90 19.01 117.07 29.77 116.06 33.30 C115.05 36.84 113.53 35.83 111.01 37.34 C108.49 38.85 105.12 40.54 100.92 42.39 C96.71 44.24 91.67 46.59 85.78 48.44 C79.89 50.29 71.15 51.97 65.60 53.49 C60.05 55.00 55.76 56.35 52.48 57.52 C49.20 58.70 46.76 59.54 45.92 60.55 C45.08 61.56 44.99 62.23 47.43 63.58 C49.87 64.92 55.84 66.94 60.55 68.62 C65.26 70.31 70.98 72.16 75.69 73.67 C80.40 75.18 85.61 76.36 88.81 77.71 C92.00 79.05 93.18 79.89 94.86 81.74 C96.55 83.59 97.55 86.45 98.90 88.81 C100.25 91.16 101.25 93.69 102.94 95.87 C104.62 98.06 107.14 100.25 108.99 101.93 C110.84 103.61 112.69 103.78 114.04 105.96 C115.38 108.15 116.56 113.53 117.07 115.05 L117.67 115.05 L117.67 16.15 Z" fill="#3f7cab"/>
<rect x="116.17" y="16.15" width="1.8" height="98.90" fill="#5a6673" opacity="0.5"/>
<defs><linearGradient id="sg383990" x1="0" y1="0" x2="0" y2="1"><stop offset="0" stop-color="#8cb0d4" stop-opacity="0.2"/><stop offset="0.12" stop-color="#8cb0d4" stop-opacity="0.95"/><stop offset="0.88" stop-color="#8cb0d4" stop-opacity="0.95"/><stop offset="1" stop-color="#8cb0d4" stop-opacity="0.2"/></linearGradient></defs>
<rect x="112.02" y="35.35" width="9.08" height="67.56" fill="url(#sg383990)"/>
<rect x="120.39" y="58.66" width="0.9" height="0.9" fill="#7a8ea2" opacity="0.55"/>
<rect x="116.99" y="90.27" width="0.9" height="0.9" fill="#7a8ea2" opacity="0.55"/>
<rect x="114.06" y="74.03" width="0.9" height="0.9" fill="#c98a98" opacity="0.55"/>
<rect x="117.56" y="54.53" width="0.9" height="0.9" fill="#7a8ea2" opacity="0.55"/>
<rect x="118.09" y="76.58" width="0.9" height="0.9" fill="#7a8ea2" opacity="0.55"/>
<rect x="114.43" y="72.56" width="0.9" height="0.9" fill="#c98a98" opacity="0.55"/>
<rect x="120.35" y="93.99" width="0.9" height="0.9" fill="#c98a98" opacity="0.55"/>
<rect x="117.61" y="91.30" width="0.9" height="0.9" fill="#7a8ea2" opacity="0.55"/>
<rect x="115.43" y="46.73" width="0.9" height="0.9" fill="#6b7f93" opacity="0.55"/>
<rect x="116.19" y="92.18" width="0.9" height="0.9" fill="#6b7f93" opacity="0.55"/>
<rect x="117.51" y="57.25" width="0.9" height="0.9" fill="#6b7f93" opacity="0.55"/>
<rect x="115.61" y="85.71" width="0.9" height="0.9" fill="#6b7f93" opacity="0.55"/>
<rect x="117.51" y="49.06" width="0.9" height="0.9" fill="#a9c4de" opacity="0.55"/>
<rect x="116.63" y="44.20" width="0.9" height="0.9" fill="#c98a98" opacity="0.55"/>
<rect x="119.01" y="88.54" width="0.9" height="0.9" fill="#c98a98" opacity="0.55"/>
<rect x="115.43" y="97.43" width="0.9" height="0.9" fill="#6b7f93" opacity="0.55"/>
<rect x="120.09" y="77.94" width="0.9" height="0.9" fill="#c98a98" opacity="0.55"/>
<rect x="119.91" y="48.49" width="0.9" height="0.9" fill="#7a8ea2" opacity="0.55"/>
<rect x="119.15" y="59.61" width="0.9" height="0.9" fill="#a9c4de" opacity="0.55"/>
<rect x="116.25" y="45.84" width="0.9" height="0.9" fill="#6b7f93" opacity="0.55"/>
<rect x="113.17" y="64.06" width="0.9" height="0.9" fill="#6b7f93" opacity="0.55"/>
<rect x="117.58" y="75.49" width="0.9" height="0.9" fill="#6b7f93" opacity="0.55"/>
<rect x="119.47" y="46.89" width="0.9" height="0.9" fill="#7a8ea2" opacity="0.55"/>
<rect x="115.11" y="55.33" width="0.9" height="0.9" fill="#6b7f93" opacity="0.55"/>
<rect x="120.31" y="85.94" width="0.9" height="0.9" fill="#7a8ea2" opacity="0.55"/>
<rect x="117.90" y="58.17" width="0.9" height="0.9" fill="#c98a98" opacity="0.55"/>
<rect x="121.04" y="51.35" width="0.9" height="0.9" fill="#c98a98" opacity="0.55"/>
<rect x="116.57" y="93.78" width="0.9" height="0.9" fill="#6b7f93" opacity="0.55"/>
<rect x="120.15" y="75.48" width="0.9" height="0.9" fill="#a9c4de" opacity="0.55"/>
<rect x="112.71" y="87.09" width="0.9" height="0.9" fill="#a9c4de" opacity="0.55"/>
<rect x="116.02" y="71.51" width="0.9" height="0.9" fill="#a9c4de" opacity="0.55"/>
<rect x="120.32" y="72.91" width="0.9" height="0.9" fill="#6b7f93" opacity="0.55"/>
<rect x="116.42" y="58.93" width="0.9" height="0.9" fill="#6b7f93" opacity="0.55"/>
<rect x="120.18" y="53.19" width="0.9" height="0.9" fill="#c98a98" opacity="0.55"/>
<rect x="113.30" y="46.61" width="0.9" height="0.9" fill="#a9c4de" opacity="0.55"/>
<rect x="114.16" y="75.70" width="0.9" height="0.9" fill="#7a8ea2" opacity="0.55"/>
<rect x="119.70" y="89.23" width="0.9" height="0.9" fill="#c98a98" opacity="0.55"/>
<rect x="116.25" y="41.82" width="0.9" height="0.9" fill="#6b7f93" opacity="0.55"/>
<rect x="119.77" y="67.12" width="0.9" height="0.9" fill="#7a8ea2" opacity="0.55"/>
<rect x="114.49" y="97.21" width="0.9" height="0.9" fill="#c98a98" opacity="0.55"/>
<rect x="115.78" y="50.13" width="0.9" height="0.9" fill="#7a8ea2" opacity="0.55"/>
<rect x="118.14" y="43.23" width="0.9" height="0.9" fill="#a9c4de" opacity="0.55"/>
<rect x="120.45" y="78.41" width="0.9" height="0.9" fill="#c98a98" opacity="0.55"/>
<rect x="112.40" y="57.75" width="0.9" height="0.9" fill="#c98a98" opacity="0.55"/>
<rect x="112.41" y="84.95" width="0.9" height="0.9" fill="#c98a98" opacity="0.55"/>
<rect x="118.37" y="44.53" width="0.9" height="0.9" fill="#6b7f93" opacity="0.55"/>
<rect x="114.82" y="65.45" width="0.9" height="0.9" fill="#7a8ea2" opacity="0.55"/>
<rect x="113.02" y="48.50" width="0.9" height="0.9" fill="#a9c4de" opacity="0.55"/>
<rect x="114.98" y="87.79" width="0.9" height="0.9" fill="#c98a98" opacity="0.55"/>
<rect x="120.78" y="85.93" width="0.9" height="0.9" fill="#c98a98" opacity="0.55"/>
<rect x="113.13" y="83.43" width="0.9" height="0.9" fill="#a9c4de" opacity="0.55"/>
<rect x="113.81" y="62.68" width="0.9" height="0.9" fill="#a9c4de" opacity="0.55"/>
<rect x="117.99" y="43.67" width="0.9" height="0.9" fill="#6b7f93" opacity="0.55"/>
<rect x="116.93" y="56.38" width="0.9" height="0.9" fill="#7a8ea2" opacity="0.55"/>
<rect x="113.74" y="82.30" width="0.9" height="0.9" fill="#c98a98" opacity="0.55"/>
<rect x="116.35" y="51.43" width="0.9" height="0.9" fill="#6b7f93" opacity="0.55"/>
<rect x="113.03" y="89.54" width="0.9" height="0.9" fill="#a9c4de" opacity="0.55"/>
<rect x="115.88" y="60.32" width="0.9" height="0.9" fill="#c98a98" opacity="0.55"/>
<rect x="116.55" y="90.27" width="0.9" height="0.9" fill="#6b7f93" opacity="0.55"/>
<rect x="113.84" y="55.20" width="0.9" height="0.9" fill="#7a8ea2" opacity="0.55"/>
<rect x="116.35" y="50.40" width="0.9" height="0.9" fill="#a9c4de" opacity="0.55"/>
<rect x="120.52" y="56.81" width="0.9" height="0.9" fill="#6b7f93" opacity="0.55"/>
<rect x="114.10" y="65.89" width="0.9" height="0.9" fill="#a9c4de" opacity="0.55"/>
<rect x="120.80" y="83.05" width="0.9" height="0.9" fill="#6b7f93" opacity="0.55"/>
<rect x="112.34" y="94.52" width="0.9" height="0.9" fill="#a9c4de" opacity="0.55"/>
<rect x="113.83" y="85.51" width="0.9" height="0.9" fill="#7a8ea2" opacity="0.55"/>
<rect x="112.33" y="72.36" width="0.9" height="0.9" fill="#7a8ea2" opacity="0.55"/>
<rect x="117.60" y="66.84" width="0.9" height="0.9" fill="#7a8ea2" opacity="0.55"/>
<rect x="116.76" y="69.04" width="0.9" height="0.9" fill="#a9c4de" opacity="0.55"/>
<rect x="113.65" y="92.80" width="0.9" height="0.9" fill="#6b7f93" opacity="0.55"/>
<rect x="183.5" y="11.50" width="21.5" height="21" fill="#fff" stroke="#eee" stroke-width="0.5"/>
<rect x="192" y="13.00" width="6" height="1" fill="#222" opacity="0.5"/>
<rect x="186" y="17.00" width="10" height="2" rx="0.8" fill="#4f7fa6"/>
<rect x="186" y="20.30" width="10" height="2.8" rx="0.8" fill="#dc3044"/>
<rect x="199.5" y="17.50" width="4" height="1" fill="#333" opacity="0.45"/>
<rect x="199.5" y="21.50" width="2.5" height="1" fill="#333" opacity="0.45"/>
<rect x="199.5" y="25.00" width="4" height="1" fill="#333" opacity="0.45"/>
<rect x="199.5" y="29.00" width="2.5" height="1" fill="#333" opacity="0.45"/>
<rect x="108" y="121.70" width="17" height="1" fill="#222" opacity="0.32"/>
<rect x="108" y="129.00" width="17" height="1" fill="#222" opacity="0.32"/>
<rect x="108" y="133.50" width="15" height="1" fill="#222" opacity="0.32"/>
<rect x="108" y="137.00" width="17" height="1" fill="#222" opacity="0.32"/>
<rect x="113" y="140.50" width="7" height="1" fill="#222" opacity="0.32"/></g></svg>
<div class="cell" style="left:46px;top:1355px;width:525px;height:178px;"></div>
<div class="cell" style="left:571px;top:1355px;width:525px;height:178px;"></div>
<div class="cell" style="left:1096px;top:1355px;width:525px;height:178px;"></div>
<div class="cell" style="left:1621px;top:1355px;width:525px;height:178px;"></div>
<svg style="position:absolute;left:1250px;top:1368px" width="220" height="150" viewBox="0 0 220 150"><defs><filter id="bl1368" x="-5%" y="-5%" width="110%" height="110%"><feGaussianBlur stdDeviation="0.35"/></filter></defs><g filter="url(#bl1368)"><rect x="26.4" y="9.6" width="180.5" height="110.3" fill="none" stroke="#e3e3e3" stroke-width="1.9"/>
<rect x="17" y="21.81" width="6" height="1.1" fill="#222" opacity="0.42"/>
<rect x="25" y="22.11" width="2.5" height="0.6" fill="#888" opacity="0.45"/>
<rect x="17" y="33.72" width="6" height="1.1" fill="#222" opacity="0.42"/>
<rect x="25" y="34.02" width="2.5" height="0.6" fill="#888" opacity="0.45"/>
<rect x="17" y="46.84" width="6" height="1.1" fill="#222" opacity="0.42"/>
<rect x="25" y="47.14" width="2.5" height="0.6" fill="#888" opacity="0.45"/>
<rect x="17" y="58.65" width="6" height="1.1" fill="#222" opacity="0.42"/>
<rect x="25" y="58.95" width="2.5" height="0.6" fill="#888" opacity="0.45"/>
<rect x="17" y="71.77" width="6" height="1.1" fill="#222" opacity="0.42"/>
<rect x="25" y="72.07" width="2.5" height="0.6" fill="#888" opacity="0.45"/>
<rect x="17" y="84.89" width="6" height="1.1" fill="#222" opacity="0.42"/>
<rect x="25" y="85.19" width="2.5" height="0.6" fill="#888" opacity="0.45"/>
<rect x="17" y="96.80" width="6" height="1.1" fill="#222" opacity="0.42"/>
<rect x="25" y="97.10" width="2.5" height="0.6" fill="#888" opacity="0.45"/>
<rect x="17" y="109.91" width="6" height="1.1" fill="#222" opacity="0.42"/>
<rect x="25" y="110.21" width="2.5" height="0.6" fill="#888" opacity="0.45"/>
<rect x="12.2" y="42.39" width="1.1" height="49.45" fill="#333" opacity="0.35"/>
<path d="M117.07 30.32 C117.40 30.99 118.41 31.47 119.08 34.32 C119.76 37.17 120.43 44.75 121.10 47.44 C121.77 50.13 121.94 49.12 123.12 50.47 C124.30 51.81 127.07 53.33 128.17 55.51 C129.26 57.70 129.68 60.56 129.68 63.59 C129.68 66.62 128.92 70.99 128.17 73.68 C127.41 76.37 125.64 77.38 125.14 79.73 C124.63 82.09 125.05 85.29 125.14 87.81 C125.22 90.33 125.98 92.52 125.64 94.87 C125.31 97.23 124.05 100.09 123.12 101.94 C122.20 103.79 120.85 104.29 120.09 105.97 C119.34 107.66 119.08 110.35 118.58 112.03 C118.07 113.70 117.32 115.36 117.07 116.03 Z" fill="#dc3044"/>
<path d="M117.07 16.16 C116.90 18.85 116.73 28.43 116.06 32.30 C115.38 36.17 114.71 37.35 113.03 39.37 C111.35 41.39 109.66 42.73 105.96 44.41 C102.26 46.10 96.71 47.78 90.83 49.46 C84.94 51.14 77.03 52.65 70.64 54.51 C64.25 56.36 56.60 58.71 52.48 60.56 C48.36 62.41 46.59 64.09 45.92 65.61 C45.25 67.12 45.16 67.96 48.44 69.64 C51.72 71.32 59.37 73.51 65.60 75.70 C71.82 77.88 81.41 80.74 85.78 82.76 C90.15 84.78 90.66 86.13 91.84 87.81 C93.01 89.49 92.84 91.51 92.84 92.85 C92.84 94.20 91.84 94.87 91.84 95.88 C91.84 96.89 91.33 97.73 92.84 98.91 C94.36 100.09 97.89 101.43 100.92 102.95 C103.95 104.46 108.49 106.48 111.01 107.99 C113.53 109.51 115.05 110.85 116.06 112.03 C117.07 113.21 116.90 114.55 117.07 115.06 L117.67 115.06 L117.67 16.16 Z" fill="#3f7cab"/>
<rect x="116.17" y="16.16" width="1.8" height="98.90" fill="#5a6673" opacity="0.5"/>
<defs><linearGradient id="sg4641040" x1="0" y1="0" x2="0" y2="1"><stop offset="0" stop-color="#8cb0d4" stop-opacity="0.2"/><stop offset="0.12" stop-color="#8cb0d4" stop-opacity="0.95"/><stop offset="0.88" stop-color="#8cb0d4" stop-opacity="0.95"/><stop offset="1" stop-color="#8cb0d4" stop-opacity="0.2"/></linearGradient></defs>
<rect x="112.02" y="43.43" width="9.08" height="63.52" fill="url(#sg4641040)"/>
<rect x="112.39" y="66.34" width="0.9" height="0.9" fill="#c98a98" opacity="0.55"/>
<rect x="116.71" y="91.84" width="0.9" height="0.9" fill="#7a8ea2" opacity="0.55"/>
<rect x="118.45" y="86.30" width="0.9" height="0.9" fill="#7a8ea2" opacity="0.55"/>
<rect x="112.54" y="49.22" width="0.9" height="0.9" fill="#a9c4de" opacity="0.55"/>
<rect x="120.39" y="67.22" width="0.9" height="0.9" fill="#c98a98" opacity="0.55"/>
<rect x="113.77" y="76.38" width="0.9" height="0.9" fill="#6b7f93" opacity="0.55"/>
<rect x="116.49" y="53.63" width="0.9" height="0.9" fill="#6b7f93" opacity="0.55"/>
<rect x="112.35" y="76.61" width="0.9" height="0.9" fill="#c98a98" opacity="0.55"/>
<rect x="119.98" y="68.84" width="0.9" height="0.9" fill="#7a8ea2" opacity="0.55"/>
<rect x="112.72" y="103.01" width="0.9" height="0.9" fill="#6b7f93" opacity="0.55"/>
<rect x="120.89" y="73.44" width="0.9" height="0.9" fill="#c98a98" opacity="0.55"/>
<rect x="120.69" y="91.99" width="0.9" height="0.9" fill="#6b7f93" opacity="0.55"/>
<rect x="114.84" y="77.19" width="0.9" height="0.9" fill="#7a8ea2" opacity="0.55"/>
<rect x="120.11" y="76.17" width="0.9" height="0.9" fill="#7a8ea2" opacity="0.55"/>
<rect x="112.66" y="48.12" width="0.9" height="0.9" fill="#7a8ea2" opacity="0.55"/>
<rect x="112.61" y="88.26" width="0.9" height="0.9" fill="#a9c4de" opacity="0.55"/>
<rect x="115.31" y="59.67" width="0.9" height="0.9" fill="#a9c4de" opacity="0.55"/>
<rect x="115.88" y="67.80" width="0.9" height="0.9" fill="#c98a98" opacity="0.55"/>
<rect x="113.70" y="61.65" width="0.9" height="0.9" fill="#c98a98" opacity="0.55"/>
<rect x="119.91" y="49.89" width="0.9" height="0.9" fill="#c98a98" opacity="0.55"/>
<rect x="114.69" y="103.35" width="0.9" height="0.9" fill="#6b7f93" opacity="0.55"/>
<rect x="119.60" y="80.93" width="0.9" height="0.9" fill="#c98a98" opacity="0.55"/>
<rect x="112.66" y="73.66" width="0.9" height="0.9" fill="#6b7f93" opacity="0.55"/>
<rect x="115.51" y="66.68" width="0.9" height="0.9" fill="#6b7f93" opacity="0.55"/>
<rect x="120.13" y="71.37" width="0.9" height="0.9" fill="#a9c4de" opacity="0.55"/>
<rect x="120.97" y="60.88" width="0.9" height="0.9" fill="#a9c4de" opacity="0.55"/>
<rect x="112.71" y="59.41" width="0.9" height="0.9" fill="#6b7f93" opacity="0.55"/>
<rect x="118.76" y="70.44" width="0.9" height="0.9" fill="#c98a98" opacity="0.55"/>
<rect x="120.61" y="101.39" width="0.9" height="0.9" fill="#6b7f93" opacity="0.55"/>
<rect x="119.69" y="70.28" width="0.9" height="0.9" fill="#7a8ea2" opacity="0.55"/>
<rect x="118.28" y="85.94" width="0.9" height="0.9" fill="#a9c4de" opacity="0.55"/>
<rect x="114.51" y="73.13" width="0.9" height="0.9" fill="#c98a98" opacity="0.55"/>
<rect x="113.22" y="97.02" width="0.9" height="0.9" fill="#7a8ea2" opacity="0.55"/>
<rect x="116.17" y="52.89" width="0.9" height="0.9" fill="#7a8ea2" opacity="0.55"/>
<rect x="116.56" y="97.05" width="0.9" height="0.9" fill="#a9c4de" opacity="0.55"/>
<rect x="119.81" y="81.56" width="0.9" height="0.9" fill="#c98a98" opacity="0.55"/>
<rect x="116.99" y="73.41" width="0.9" height="0.9" fill="#c98a98" opacity="0.55"/>
<rect x="113.58" y="99.11" width="0.9" height="0.9" fill="#c98a98" opacity="0.55"/>
<rect x="113.39" y="85.67" width="0.9" height="0.9" fill="#7a8ea2" opacity="0.55"/>
<rect x="118.70" y="69.47" width="0.9" height="0.9" fill="#a9c4de" opacity="0.55"/>
<rect x="115.57" y="66.90" width="0.9" height="0.9" fill="#a9c4de" opacity="0.55"/>
<rect x="119.03" y="74.93" width="0.9" height="0.9" fill="#a9c4de" opacity="0.55"/>
<rect x="114.85" y="77.73" width="0.9" height="0.9" fill="#c98a98" opacity="0.55"/>
<rect x="113.29" y="84.80" width="0.9" height="0.9" fill="#a9c4de" opacity="0.55"/>
<rect x="117.07" y="48.97" width="0.9" height="0.9" fill="#6b7f93" opacity="0.55"/>
<rect x="113.65" y="102.10" width="0.9" height="0.9" fill="#7a8ea2" opacity="0.55"/>
<rect x="114.16" y="58.98" width="0.9" height="0.9" fill="#7a8ea2" opacity="0.55"/>
<rect x="117.83" y="64.77" width="0.9" height="0.9" fill="#c98a98" opacity="0.55"/>
<rect x="117.86" y="58.75" width="0.9" height="0.9" fill="#a9c4de" opacity="0.55"/>
<rect x="120.28" y="49.55" width="0.9" height="0.9" fill="#c98a98" opacity="0.55"/>
<rect x="114.99" y="90.86" width="0.9" height="0.9" fill="#7a8ea2" opacity="0.55"/>
<rect x="116.51" y="87.04" width="0.9" height="0.9" fill="#a9c4de" opacity="0.55"/>
<rect x="112.51" y="51.72" width="0.9" height="0.9" fill="#c98a98" opacity="0.55"/>
<rect x="115.38" y="89.55" width="0.9" height="0.9" fill="#a9c4de" opacity="0.55"/>
<rect x="112.68" y="99.21" width="0.9" height="0.9" fill="#a9c4de" opacity="0.55"/>
<rect x="113.56" y="93.25" width="0.9" height="0.9" fill="#c98a98" opacity="0.55"/>
<rect x="114.45" y="67.57" width="0.9" height="0.9" fill="#c98a98" opacity="0.55"/>
<rect x="118.42" y="90.29" width="0.9" height="0.9" fill="#a9c4de" opacity="0.55"/>
<rect x="113.56" y="79.33" width="0.9" height="0.9" fill="#6b7f93" opacity="0.55"/>
<rect x="119.12" y="51.27" width="0.9" height="0.9" fill="#c98a98" opacity="0.55"/>
<rect x="116.38" y="99.86" width="0.9" height="0.9" fill="#6b7f93" opacity="0.55"/>
<rect x="116.53" y="72.32" width="0.9" height="0.9" fill="#c98a98" opacity="0.55"/>
<rect x="114.74" y="80.06" width="0.9" height="0.9" fill="#6b7f93" opacity="0.55"/>
<rect x="119.74" y="88.74" width="0.9" height="0.9" fill="#a9c4de" opacity="0.55"/>
<rect x="116.16" y="99.59" width="0.9" height="0.9" fill="#7a8ea2" opacity="0.55"/>
<rect x="115.08" y="54.92" width="0.9" height="0.9" fill="#a9c4de" opacity="0.55"/>
<rect x="116.35" y="69.84" width="0.9" height="0.9" fill="#c98a98" opacity="0.55"/>
<rect x="117.01" y="51.78" width="0.9" height="0.9" fill="#c98a98" opacity="0.55"/>
<rect x="118.53" y="53.40" width="0.9" height="0.9" fill="#a9c4de" opacity="0.55"/>
<rect x="112.78" y="60.54" width="0.9" height="0.9" fill="#a9c4de" opacity="0.55"/>
<rect x="183.5" y="11.50" width="21.5" height="21" fill="#fff" stroke="#eee" stroke-width="0.5"/>
<rect x="192" y="13.00" width="6" height="1" fill="#222" opacity="0.5"/>
<rect x="186" y="17.00" width="10" height="2" rx="0.8" fill="#4f7fa6"/>
<rect x="186" y="20.30" width="10" height="2.8" rx="0.8" fill="#dc3044"/>
<rect x="199.5" y="17.50" width="4" height="1" fill="#333" opacity="0.45"/>
<rect x="199.5" y="21.50" width="2.5" height="1" fill="#333" opacity="0.45"/>
<rect x="199.5" y="25.00" width="4" height="1" fill="#333" opacity="0.45"/>
<rect x="199.5" y="29.00" width="2.5" height="1" fill="#333" opacity="0.45"/>
<rect x="108" y="121.70" width="17" height="1" fill="#222" opacity="0.32"/>
<rect x="108" y="129.00" width="17" height="1" fill="#222" opacity="0.32"/>
<rect x="108" y="133.50" width="15" height="1" fill="#222" opacity="0.32"/>
<rect x="108" y="137.00" width="17" height="1" fill="#222" opacity="0.32"/>
<rect x="113" y="140.50" width="7" height="1" fill="#222" opacity="0.32"/></g></svg>
<div class="a" id="ds" style="left:232.30px;top:27.00px;font-size:33.5px;color:#000;transform:scaleX(0.9355);">ssc_pheno</div>
<div class="a" id="n1a" style="left:670.60px;top:30.00px;font-size:26.6px;color:#c8c9cb;transform:scaleX(0.9017);">Gene</div>
<div class="a" id="n1b" style="left:669.40px;top:68.00px;font-size:26.6px;color:#c8c9cb;transform:scaleX(0.9622);">Browser</div>
<div class="a" id="n2a" style="left:851.00px;top:30.00px;font-size:26.6px;color:#c8c9cb;transform:scaleX(0.9469);">Genotype</div>
<div class="a" id="n2b" style="left:850.00px;top:68.00px;font-size:26.6px;color:#c8c9cb;transform:scaleX(0.9665);">Browser</div>
<div class="a" id="n3a" style="left:1078.60px;top:30.00px;font-size:26.6px;-webkit-text-stroke-width:0.6px;color:#fff;transform:scaleX(0.9502);">Phenotype</div>
<div class="a" id="n3b" style="left:1077.60px;top:68.00px;font-size:26.6px;-webkit-text-stroke-width:0.6px;color:#fff;transform:scaleX(0.9689);">Browser</div>
<div class="a" id="n4a" style="left:1315.40px;top:30.00px;font-size:26.6px;color:#c8c9cb;transform:scaleX(0.9683);">Enrichment</div>
<div class="a" id="n4b" style="left:1316.40px;top:68.00px;font-size:26.6px;color:#c8c9cb;transform:scaleX(1.0309);">Tool</div>
<div class="a" id="n5a" style="left:1521.10px;top:30.00px;font-size:26.6px;color:#c8c9cb;transform:scaleX(0.9646);">Phenotype</div>
<div class="a" id="n5b" style="left:1523.10px;top:68.00px;font-size:26.6px;color:#c8c9cb;transform:scaleX(1.0350);">Tool</div>
<div class="a" id="n6a" style="left:1718.40px;top:30.00px;font-size:26.6px;color:#6f7174;transform:scaleX(0.9490);">Dataset</div>
<div class="a" id="n6b" style="left:1718.40px;top:68.00px;font-size:26.6px;color:#6f7174;transform:scaleX(0.9816);">Description</div>
<div class="a" id="n7a" style="left:1960.10px;top:30.00px;font-size:26.6px;color:#6f7174;transform:scaleX(0.9580);">Dataset</div>
<div class="a" id="n7b" style="left:1961.10px;top:68.00px;font-size:26.6px;color:#6f7174;transform:scaleX(0.9981);">Statistics</div>
<div class="a" id="inst" style="left:66.80px;top:177.00px;font-size:26.6px;color:#212529;transform:scaleX(0.9782);">All instruments</div>
<div class="a" id="srch" style="left:449.40px;top:177.00px;font-size:26.6px;color:#545a60;transform:scaleX(0.9271);">Search</div>
<div class="a" id="pm" style="left:1834.30px;top:177.00px;font-size:26.6px;color:#212529;transform:scaleX(0.9489);">Phenotype measures</div>
<div class="a" id="cnt" style="left:45.80px;top:242.00px;font-size:19.9px;-webkit-text-stroke-width:0.75px;color:#212529;transform:scaleX(0.9698);">Measures count: 6</div>
<div class="a" id="h1" style="left:232.70px;top:361.00px;font-size:23.4px;font-weight:bold;color:#212529;transform:scaleX(0.9325);">Instrument</div>
<div class="a" id="h2" style="left:733.30px;top:361.00px;font-size:23.4px;font-weight:bold;color:#212529;transform:scaleX(0.9408);">Pheno Measure</div>
<div class="a" id="h3" style="left:1240.10px;top:363.00px;font-size:23.4px;font-weight:bold;color:#212529;transform:scaleX(0.9369);">Pheno Measure Values</div>
<div class="a" id="h4" style="left:1947.50px;top:336.00px;font-size:23.4px;font-weight:bold;color:#212529;transform:scaleX(0.9472);">Measure Type</div>
<div class="a" id="h5" style="left:1939.60px;top:389.00px;font-size:23.4px;font-weight:bold;color:#212529;transform:scaleX(0.9302);">Values Domain</div>
<div class="a" id="r0c1" style="left:199.50px;top:544.00px;font-size:26.6px;color:#212529;transform:scaleX(0.9493);">proband_measures</div>
<div class="a" id="r0c2" style="left:623.20px;top:544.00px;font-size:26.6px;color:#212529;transform:scaleX(0.9702);">fatherAgeInMonthsAtBirthOfProband</div>
<div class="a" id="r0c4a" style="left:1820.10px;top:525.00px;font-size:26.6px;color:#212529;transform:scaleX(0.9859);">continuous</div>
<div class="a" id="r0c4b" style="left:1834.70px;top:563.00px;font-size:26.6px;color:#212529;transform:scaleX(0.8920);">205, 691</div>
<div class="a" id="r1c1" style="left:199.50px;top:721.00px;font-size:26.6px;color:#212529;transform:scaleX(0.9493);">proband_measures</div>
<div class="a" id="r1c2" style="left:772.60px;top:721.00px;font-size:26.6px;color:#212529;transform:scaleX(0.9504);">fatherRace</div>
<div class="a" id="r1c4a" style="left:1819.70px;top:667.00px;font-size:26.6px;color:#212529;transform:scaleX(0.9857);">categorical</div>
<div class="a" id="r1c4b" style="left:1659.50px;top:706.00px;font-size:26.6px;color:#212529;transform:scaleX(0.9399);">NA, african-amer, asian, more-than-one-</div>
<div class="a" id="r1c4c" style="left:1640.50px;top:744.00px;font-size:26.6px;color:#212529;transform:scaleX(0.9435);">race, native-american, native-hawaiian, not-</div>
<div class="a" id="r1c4d" style="left:1762.50px;top:782.00px;font-size:26.6px;color:#212529;transform:scaleX(0.9501);">specified, other, white</div>
<div class="a" id="r2c1" style="left:199.50px;top:899.00px;font-size:26.6px;color:#212529;transform:scaleX(0.9493);">proband_measures</div>
<div class="a" id="r2c2" style="left:615.40px;top:899.00px;font-size:26.6px;color:#212529;transform:scaleX(0.9720);">motherAgeInMonthsAtBirthOfProband</div>
<div class="a" id="r2c4a" style="left:1820.10px;top:880.00px;font-size:26.6px;color:#212529;transform:scaleX(0.9859);">continuous</div>
<div class="a" id="r2c4b" style="left:1835.80px;top:918.00px;font-size:26.6px;color:#212529;transform:scaleX(0.9284);">193, 543</div>
<div class="a" id="r3c1" style="left:199.50px;top:1076.00px;font-size:26.6px;color:#212529;transform:scaleX(0.9493);">proband_measures</div>
<div class="a" id="r3c2" style="left:765.10px;top:1076.00px;font-size:26.6px;color:#212529;transform:scaleX(0.9511);">motherRace</div>
<div class="a" id="r3c4a" style="left:1819.70px;top:1022.00px;font-size:26.6px;color:#212529;transform:scaleX(0.9857);">categorical</div>
<div class="a" id="r3c4b" style="left:1659.50px;top:1061.00px;font-size:26.6px;color:#212529;transform:scaleX(0.9399);">NA, african-amer, asian, more-than-one-</div>
<div class="a" id="r3c4c" style="left:1640.50px;top:1099.00px;font-size:26.6px;color:#212529;transform:scaleX(0.9435);">race, native-american, native-hawaiian, not-</div>
<div class="a" id="r3c4d" style="left:1762.50px;top:1137.00px;font-size:26.6px;color:#212529;transform:scaleX(0.9501);">specified, other, white</div>
<div class="a" id="r4c1" style="left:199.50px;top:1254.00px;font-size:26.6px;color:#212529;transform:scaleX(0.9493);">proband_measures</div>
<div class="a" id="r4c2" style="left:756.70px;top:1254.00px;font-size:26.6px;color:#212529;transform:scaleX(0.9396);">probandNVIQ</div>
<div class="a" id="r4c4a" style="left:1820.10px;top:1235.00px;font-size:26.6px;color:#212529;transform:scaleX(0.9859);">continuous</div>
<div class="a" id="r4c4b" style="left:1848.70px;top:1273.00px;font-size:26.6px;color:#212529;transform:scaleX(0.8780);">9, 161</div>
<div class="a" id="r5c1" style="left:199.50px;top:1432.00px;font-size:26.6px;color:#212529;transform:scaleX(0.9493);">proband_measures</div>
<div class="a" id="r5c2" style="left:766.50px;top:1432.00px;font-size:26.6px;color:#212529;transform:scaleX(0.9357);">probandVIQ</div>
<div class="a" id="r5c4a" style="left:1820.10px;top:1413.00px;font-size:26.6px;color:#212529;transform:scaleX(0.9859);">continuous</div>
<div class="a" id="r5c4b" style="left:1850.10px;top:1451.00px;font-size:26.6px;color:#212529;transform:scaleX(0.9114);">5, 167</div>
</body>
</html>
